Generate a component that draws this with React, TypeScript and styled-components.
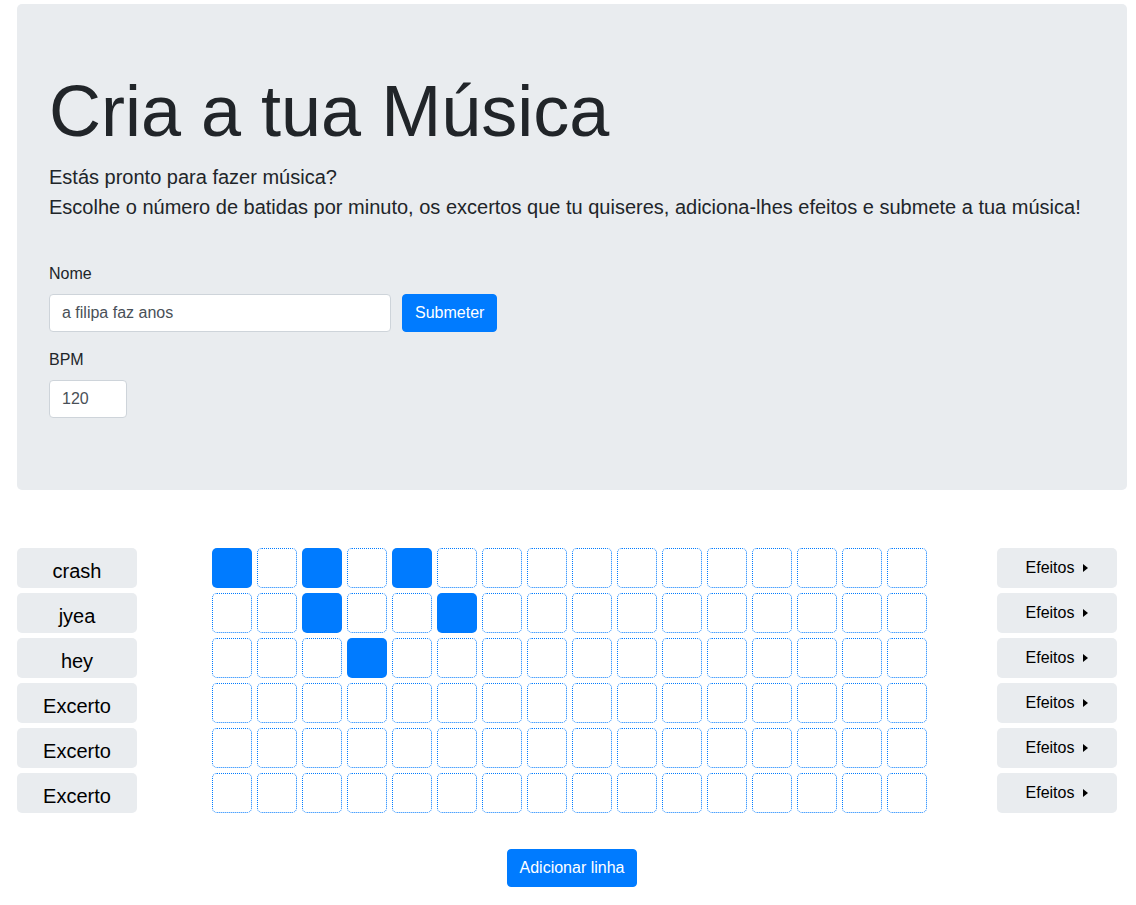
import React from "react";
import styled, { createGlobalStyle } from "styled-components";

const GlobalStyle = createGlobalStyle`
  html, body { margin: 0; padding: 0; background: #fff; }
  body {
    font-family: "Liberation Sans", Arial, Helvetica, sans-serif;
    font-size: 16px;
    line-height: 1.5;
    color: #212529;
  }
  * { box-sizing: border-box; }
`;

const Page = styled.div`
  padding: 4px 9px 0 17px;
`;

const Jumbotron = styled.section`
  background: #e9ecef;
  border-radius: 5px;
  padding: 64px 32px 72px;
`;

const Title = styled.h1`
  margin: 0 0 8px;
  font-size: 72px;
  font-weight: 400;
  line-height: 1.2;
  color: #212529;
`;

const Lead = styled.p`
  margin: 0;
  font-size: 20px;
  line-height: 30px;
  color: #212529;
`;

const Form = styled.form`
  margin-top: 40px;
  display: flex;
  flex-direction: column;
  gap: 16px;
`;

const Field = styled.div`
  display: flex;
  flex-direction: column;
  gap: 8px;
`;

const Label = styled.label`
  font-size: 16px;
  line-height: 24px;
`;

const InlineRow = styled.div`
  display: flex;
  align-items: center;
  gap: 11px;
`;

const Input = styled.input<{ $w: number }>`
  width: ${(p) => p.$w}px;
  height: 38px;
  padding: 6px 12px;
  font-family: inherit;
  font-size: 16px;
  line-height: 24px;
  color: #495057;
  background: #fff;
  border: 1px solid #ced4da;
  border-radius: 4px;
  outline: none;
`;

const PrimaryButton = styled.button`
  height: 38px;
  padding: 6px 12px;
  font-family: inherit;
  font-size: 16px;
  line-height: 24px;
  color: #fff;
  background: #007bff;
  border: 1px solid #007bff;
  border-radius: 4px;
  cursor: pointer;
`;

const Sequencer = styled.section`
  margin-top: 58px;
  display: flex;
  flex-direction: column;
  gap: 5px;
`;

const TrackRow = styled.div`
  display: flex;
  align-items: center;
  height: 40px;
`;

const TrackName = styled.button`
  width: 120px;
  height: 40px;
  padding: 6px 0 0;
  background: #e9ecef;
  border: none;
  border-radius: 5px;
  font-family: inherit;
  font-size: 20px;
  line-height: 24px;
  color: #000;
`;

const Cells = styled.div`
  display: grid;
  grid-template-columns: repeat(16, 40px);
  gap: 5px;
  margin-left: 75px;
`;

const Cell = styled.div<{ $on: boolean }>`
  width: 40px;
  height: 40px;
  border: 1px dotted #007bff;
  border-radius: 5px;
  background: ${(p) => (p.$on ? "#007bff" : "#fff")};
`;

const EffectsButton = styled.button`
  margin-left: 70px;
  width: 120px;
  height: 40px;
  padding: 0;
  background: #e9ecef;
  border: none;
  border-radius: 5px;
  font-family: inherit;
  font-size: 16px;
  line-height: 24px;
  color: #000;
  display: flex;
  align-items: center;
  justify-content: center;
`;

const Caret = styled.span`
  display: inline-block;
  margin-left: 9px;
  width: 0;
  height: 0;
  border-left: 5px solid #000;
  border-top: 4.5px solid transparent;
  border-bottom: 4.5px solid transparent;
`;

const Footer = styled.div`
  margin-top: 36px;
  display: flex;
  justify-content: center;
`;

const tracks: { name: string; on: number[] }[] = [
  { name: "crash", on: [0, 2, 4] },
  { name: "jyea", on: [2, 5] },
  { name: "hey", on: [3] },
  { name: "Excerto", on: [] },
  { name: "Excerto", on: [] },
  { name: "Excerto", on: [] },
];

export default function App() {
  return (
    <>
      <GlobalStyle />
      <Page>
        <Jumbotron>
          <Title>Cria a tua Música</Title>
          <Lead>Estás pronto para fazer música?</Lead>
          <Lead>
            Escolhe o número de batidas por minuto, os excertos que tu quiseres,
            adiciona-lhes efeitos e submete a tua música!
          </Lead>
          <Form onSubmit={(e) => e.preventDefault()}>
            <Field>
              <Label>Nome</Label>
              <InlineRow>
                <Input $w={342} type="text" defaultValue="a filipa faz anos" />
                <PrimaryButton type="button">Submeter</PrimaryButton>
              </InlineRow>
            </Field>
            <Field>
              <Label>BPM</Label>
              <Input $w={78} type="text" defaultValue="120" />
            </Field>
          </Form>
        </Jumbotron>

        <Sequencer>
          {tracks.map((t, i) => (
            <TrackRow key={i}>
              <TrackName>{t.name}</TrackName>
              <Cells>
                {Array.from({ length: 16 }, (_, c) => (
                  <Cell key={c} $on={t.on.includes(c)} />
                ))}
              </Cells>
              <EffectsButton>
                Efeitos
                <Caret />
              </EffectsButton>
            </TrackRow>
          ))}
        </Sequencer>

        <Footer>
          <PrimaryButton type="button">Adicionar linha</PrimaryButton>
        </Footer>
      </Page>
    </>
  );
}
